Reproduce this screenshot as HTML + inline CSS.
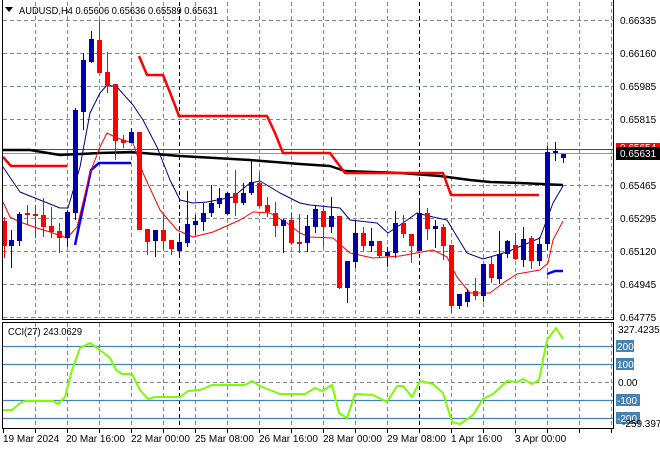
<!DOCTYPE html>
<html><head><meta charset="utf-8"><style>
html,body{margin:0;padding:0;background:#fff;}
svg{display:block;font-family:"Liberation Sans",sans-serif;}
</style></head><body>
<svg id="s" width="660" height="450" viewBox="0 0 660 450" xmlns="http://www.w3.org/2000/svg">
<rect width="660" height="450" fill="#fff"/>
<g id="grid"></g>
<g id="ind"></g>
<g id="cand"></g>
<g id="frame" fill="none" stroke="#000">
<line x1="2.5" y1="0" x2="2.5" y2="319"/>
<line x1="613.5" y1="0" x2="613.5" y2="319"/>
<line x1="2" y1="319.5" x2="614" y2="319.5"/>
<rect x="2.5" y="322.5" width="611" height="106"/>
</g>
<g font-size="10.5" fill="#000">
<polygon points="5,7 13,7 9,12" fill="#000"/>
<text x="19" y="14" textLength="199" lengthAdjust="spacingAndGlyphs">AUDUSD,H4 0.65606 0.65636 0.65589 0.65631</text>
<text x="8" y="335" textLength="74" lengthAdjust="spacingAndGlyphs">CCI(27) 243.0629</text>
</g>
<g font-size="10" fill="#000" id="axis">
<text x="620" y="24">0.66335</text>
<text x="620" y="57">0.66160</text>
<text x="620" y="90">0.65985</text>
<text x="620" y="123">0.65815</text>
<text x="620" y="189">0.65465</text>
<text x="620" y="222">0.65295</text>
<text x="620" y="255">0.65120</text>
<text x="620" y="288">0.64945</text>
<text x="620" y="321">0.64775</text>
<rect x="616" y="143" width="44" height="8" fill="#ff0000"/>
<text x="620" y="151" fill="#fff">0.65654</text>
<rect x="616" y="147" width="44" height="13" fill="#000"/>
<text x="620" y="157" fill="#fff">0.65631</text>
<text x="618" y="333">327.4235</text>
<rect x="616" y="340" width="18" height="12" fill="#4682b4"/><text x="617" y="350" fill="#fff">200</text>
<rect x="616" y="358" width="18" height="12" fill="#4682b4"/><text x="617" y="368" fill="#fff">100</text>
<text x="618" y="386">0.00</text>
<rect x="616" y="394" width="24" height="12" fill="#4682b4"/><text x="617" y="404" fill="#fff">-100</text>
<rect x="616" y="412" width="24" height="12" fill="#4682b4"/><text x="617" y="422" fill="#fff">-200</text>
<text x="622" y="427">-259.3979</text>
</g>
<g font-size="10" fill="#000">
<text x="3" y="442">19 Mar 2024</text>
<text x="66" y="442">20 Mar 16:00</text>
<text x="131" y="442">22 Mar 00:00</text>
<text x="195" y="442">25 Mar 08:00</text>
<text x="259" y="442">26 Mar 16:00</text>
<text x="323" y="442">28 Mar 00:00</text>
<text x="387" y="442">29 Mar 08:00</text>
<text x="451" y="442">1 Apr 16:00</text>
<text x="515" y="442">3 Apr 00:00</text>
</g>
</svg>
<script>
var NS="http://www.w3.org/2000/svg";
function el(p,t,a){var e=document.createElementNS(NS,t);for(var k in a)e.setAttribute(k,a[k]);document.getElementById(p).appendChild(e);return e;}
var xs=[];for(var x=35;x<613;x+=32)xs.push(x);xs.push(179);
xs.forEach(function(x){var blk=(x==179||x==419);
 el("grid","line",{x1:x+.5,y1:2,x2:x+.5,y2:318,stroke:blk?"#000":"#7d8a96","stroke-dasharray":"4,3"});
 el("grid","line",{x1:x+.5,y1:323,x2:x+.5,y2:428,stroke:blk?"#000":"#7d8a96","stroke-dasharray":"4,3"});
 if(x!=179)el("grid","line",{x1:x+.5,y1:429,x2:x+.5,y2:433,stroke:"#000"});});
el("grid","line",{x1:3.5,y1:429,x2:3.5,y2:433,stroke:"#000"});
[20,53,86,119,185,218,251,284,317].forEach(function(y){el("grid","line",{x1:3,y1:y+.5,x2:613,y2:y+.5,stroke:"#7d8a96","stroke-dasharray":"4,3"});});
el("grid","line",{x1:3,y1:382.5,x2:613,y2:382.5,stroke:"#7d8a96","stroke-dasharray":"4,3"});
[346,364,400,418].forEach(function(y){el("grid","line",{x1:3,y1:y+.5,x2:613,y2:y+.5,stroke:"#4682b4","stroke-width":1.2});});
el("grid","line",{x1:3,y1:149.5,x2:613,y2:149.5,stroke:"#ff0000"});
el("grid","line",{x1:3,y1:153.5,x2:613,y2:153.5,stroke:"#8796a4"});
function pl(pts,c,w){el("ind","polyline",{points:pts,fill:"none",stroke:c,"stroke-width":w,"stroke-linejoin":"round"});}
pl("3,150 30,150 60,155 100,153 130,152 180,156 250,160 300,164 330,166 345,171 400,173 440,176 470,180 490,182 520,183 563,185","#000",2.5);
pl("3,157 11,166 67,166","#ff0000",2.5);
pl("139,56 147,75 163,75 171,95 179,116 267,116 275,133 283,153 330,153 345,173 443,173 451,195 539,195","#ff0000",2.5);
pl("75,245 91,170 99,163 131,163","#0000ff",2.5);
pl("547,274 555,271 563,271","#0000ff",2.5);
pl("3,167 20,192 40,200 60,208 68,208 80,167 90,113 100,93 107,85 117,87 133,105 143,120 157,147 170,180 180,200 193,203 207,202 233,197 250,183 260,181 280,193 300,203 310,205 340,208 350,220 377,223 388,233 400,225 417,213 433,217 447,220 453,230 467,253 483,259 507,252 540,238 553,203 563,186","#000080",1);
pl("3,202 10,217 20,222 37,228 50,232 67,238 77,227 90,173 100,147 107,133 117,138 133,143 143,173 160,210 177,230 193,237 213,232 240,220 253,212 270,213 287,223 300,233 310,237 333,238 350,253 373,258 400,256 433,250 447,257 457,277 470,293 490,293 503,283 517,274 540,270 548,263 553,240 563,221","#ff0000",1);
pl("3,410 12,410 20,403 25,401 53,401 58,404 65,397 72,370 80,348 90,343 100,350 110,358 116,370 122,374 132,374 140,390 148,399 155,397 180,397 188,391 200,390 212,385 245,385 252,381 260,386 275,392 280,394 305,394 315,388 322,391 332,385 339,413 347,418 355,394 373,395 387,402 397,386 403,386 412,397 420,381 433,384 443,393 452,422 460,424 473,415 483,399 493,394 507,381 517,382 523,379 532,384 539,380 547,340 556,328 563,339","#7cfc00",2);
var C=[[4,"r",221,246,217,258],[11,"b",240,246,230,268],[19,"b",214,241,212,246],[27,"r",213,215,205,225],[35,"r",214,216,205,238],[43,"r",215,227,198,237],[51,"r",226,232,207,238],[59,"r",231,238,223,253],[67,"b",212,238,210,247],[75,"b",110,213,108,220],[83,"b",60,112,53,130],[91,"b",39,62,31,63],[99,"r",40,73,20,73],[107,"r",72,86,52,93],[115,"r",84,141,84,160],[123,"r",140,143,135,148],[131,"b",132,143,128,143],[139,"r",132,230,132,230],[147,"r",229,242,229,255],[155,"b",230,241,230,257],[163,"r",230,241,215,250],[171,"r",240,249,240,255],[179,"b",242,251,237,257],[187,"b",224,243,191,247],[195,"b",221,225,215,235],[203,"b",213,222,203,231],[211,"b",203,213,185,217],[219,"b",198,204,188,208],[227,"b",193,214,192,215],[235,"r",193,203,170,216],[243,"b",193,203,183,205],[251,"b",182,193,160,195],[259,"r",183,206,173,207],[267,"r",205,212,197,217],[275,"r",213,226,202,237],[283,"b",220,226,219,253],[291,"r",220,243,213,245],[299,"r",242,244,214,253],[307,"b",226,243,215,252],[315,"b",209,227,205,233],[323,"r",211,227,205,247],[331,"b",216,227,197,233],[339,"r",216,288,216,289],[347,"b",261,288,261,303],[355,"b",233,262,221,268],[363,"r",233,246,227,251],[371,"b",241,246,228,252],[379,"r",241,256,241,258],[387,"b",252,256,247,267],[395,"b",223,253,211,258],[403,"r",223,234,215,238],[411,"r",234,246,234,263],[419,"b",213,251,201,251],[427,"r",213,229,208,240],[435,"b",226,229,220,248],[443,"r",227,246,224,260],[451,"r",245,306,245,313],[459,"b",294,306,294,309],[467,"b",292,302,289,307],[475,"r",291,296,278,300],[483,"b",264,296,264,302],[491,"r",264,278,257,283],[499,"b",254,279,231,284],[507,"b",241,254,240,258],[515,"r",245,259,233,260],[523,"b",239,260,227,267],[531,"r",238,261,236,269],[539,"b",244,261,237,266],[547,"b",152,244,146,250],[555,"b",151,153,142,161],[563,"b",154,158,154,163]];
C.forEach(function(c){var col=c[1]=="b"?"#0000a8":"#ff0000";
 el("cand","line",{x1:c[0]+.5,y1:c[4],x2:c[0]+.5,y2:c[5],stroke:col});
 var h=Math.max(c[3]-c[2],1.5);
 el("cand","rect",{x:c[0]-2,y:c[2],width:5,height:h,fill:col});});
</script>
</body></html>
